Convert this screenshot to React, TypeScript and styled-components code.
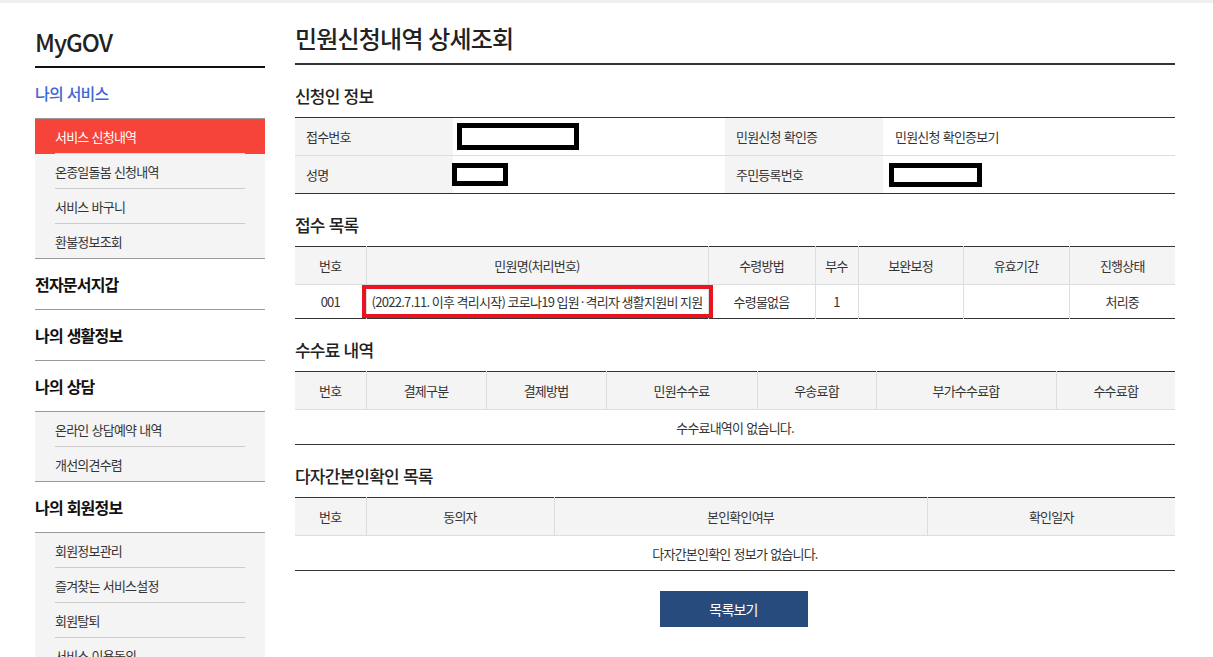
import React from "react";
import styled, { createGlobalStyle } from "styled-components";

const GlobalStyle = createGlobalStyle`
  html, body {
    margin: 0;
    padding: 0;
    background: #fff;
  }
  body {
    font-family: "Noto Sans CJK KR", "Noto Sans", sans-serif;
    color: #333;
    letter-spacing: -0.8px;
    word-spacing: 1px;
  }
  * { box-sizing: border-box; }
`;

interface MenuGroup {
  title: string;
  active?: boolean;
  items?: string[];
  current?: number;
}

const menu: MenuGroup[] = [
  { title: "나의 서비스", active: true, items: ["서비스 신청내역", "온종일돌봄 신청내역", "서비스 바구니", "환불정보조회"], current: 0 },
  { title: "전자문서지갑" },
  { title: "나의 생활정보" },
  { title: "나의 상담", items: ["온라인 상담예약 내역", "개선의견수렴"] },
  { title: "나의 회원정보", items: ["회원정보관리", "즐겨찾는 서비스설정", "회원탈퇴", "서비스 이용동의"] },
];

function App() {
  return (
    <>
      <GlobalStyle />
      <Page>
        <Sidebar>
          <Brand>MyGOV</Brand>
          {menu.map((g) => (
            <Group key={g.title}>
              <GroupTitle $active={g.active} $last={!g.items}>{g.title}</GroupTitle>
              {g.items && (
                <SubMenu>
                  {g.items.map((it, i) => (
                    <SubItem key={it} $current={g.current === i}>
                      <SubLabel $current={g.current === i}>{it}</SubLabel>
                    </SubItem>
                  ))}
                </SubMenu>
              )}
            </Group>
          ))}
        </Sidebar>

        <Main>
          <PageTitle>민원신청내역 상세조회</PageTitle>

          <SectionTitle>신청인 정보</SectionTitle>
          <Table>
            <colgroup>
              <col style={{ width: 158 }} />
              <col style={{ width: 272 }} />
              <col style={{ width: 158 }} />
              <col />
            </colgroup>
            <tbody>
              <InfoRow>
                <InfoHead>접수번호</InfoHead>
                <InfoCell $bare><Redact $w={122} $h={27} $x={4} /></InfoCell>
                <InfoHead>민원신청 확인증</InfoHead>
                <InfoCell>민원신청 확인증보기</InfoCell>
              </InfoRow>
              <InfoRow>
                <InfoHead>성명</InfoHead>
                <InfoCell $bare><Redact $w={56} $h={23} $x={-1} /></InfoCell>
                <InfoHead>주민등록번호</InfoHead>
                <InfoCell $bare><Redact $w={93} $h={24} $x={6} /></InfoCell>
              </InfoRow>
            </tbody>
          </Table>

          <SectionTitle>접수 목록</SectionTitle>
          <Table>
            <colgroup>
              <col style={{ width: 71 }} />
              <col style={{ width: 342 }} />
              <col style={{ width: 107 }} />
              <col style={{ width: 43 }} />
              <col style={{ width: 105 }} />
              <col style={{ width: 106 }} />
              <col />
            </colgroup>
            <thead>
              <tr>
                {["번호", "민원명(처리번호)", "수령방법", "부수", "보완보정", "유효기간", "진행상태"].map((h) => (
                  <HeadCell key={h}>{h}</HeadCell>
                ))}
              </tr>
            </thead>
            <tbody>
              <tr>
                <BodyCell>001</BodyCell>
                <BodyCell $tight>
                  (2022.7.11. 이후 격리시작) 코로나19 입원·격리자 생활지원비 지원
                  <Highlight />
                </BodyCell>
                <BodyCell>수령물없음</BodyCell>
                <BodyCell>1</BodyCell>
                <BodyCell />
                <BodyCell />
                <BodyCell>처리중</BodyCell>
              </tr>
            </tbody>
          </Table>

          <SectionTitle>수수료 내역</SectionTitle>
          <Table>
            <colgroup>
              <col style={{ width: 71 }} />
              <col style={{ width: 120 }} />
              <col style={{ width: 120 }} />
              <col style={{ width: 151 }} />
              <col style={{ width: 119 }} />
              <col style={{ width: 180 }} />
              <col />
            </colgroup>
            <thead>
              <tr>
                {["번호", "결제구분", "결제방법", "민원수수료", "우송료합", "부가수수료합", "수수료합"].map((h) => (
                  <HeadCell key={h}>{h}</HeadCell>
                ))}
              </tr>
            </thead>
            <tbody>
              <tr>
                <EmptyCell colSpan={7}>수수료내역이 없습니다.</EmptyCell>
              </tr>
            </tbody>
          </Table>

          <SectionTitle>다자간본인확인 목록</SectionTitle>
          <Table>
            <colgroup>
              <col style={{ width: 71 }} />
              <col style={{ width: 188 }} />
              <col style={{ width: 373 }} />
              <col />
            </colgroup>
            <thead>
              <tr>
                {["번호", "동의자", "본인확인여부", "확인일자"].map((h) => (
                  <HeadCell key={h}>{h}</HeadCell>
                ))}
              </tr>
            </thead>
            <tbody>
              <tr>
                <EmptyCell colSpan={4}>다자간본인확인 정보가 없습니다.</EmptyCell>
              </tr>
            </tbody>
          </Table>

          <ButtonRow>
            <ListButton type="button">목록보기</ListButton>
          </ButtonRow>
        </Main>
      </Page>
    </>
  );
}

const Page = styled.div`
  width: 1213px;
  height: 657px;
  overflow: hidden;
  border-top: 3px solid #efefef;
  display: flex;
  align-items: flex-start;
  gap: 30px;
  padding-left: 35px;
`;

const Sidebar = styled.nav`
  width: 230px;
  flex-shrink: 0;
  display: flex;
  flex-direction: column;
`;

const Brand = styled.div`
  margin-top: 22px;
  height: 43px;
  line-height: 34px;
  font-size: 24px;
  font-weight: 500;
  color: #222;
  border-bottom: 2px solid #111;
  letter-spacing: -1px;
`;

const Group = styled.div`
  display: flex;
  flex-direction: column;
`;

const GroupTitle = styled.div<{ $active?: boolean; $last?: boolean }>`
  height: ${(p) => (p.$last ? 51 : 50)}px;
  display: flex;
  align-items: center;
  font-size: 16px;
  font-weight: ${(p) => (p.$active ? 500 : 700)};
  color: ${(p) => (p.$active ? "#3c68d6" : "#111")};
  border-bottom: ${(p) => (p.$last ? "1px solid #999" : "none")};
`;

const SubMenu = styled.ul`
  list-style: none;
  margin: 0;
  padding: 0;
  background: #f4f4f4;
  border-top: 1px solid #999;
  border-bottom: 1px solid #999;
`;

const SubItem = styled.li<{ $current?: boolean }>`
  height: 35px;
  padding: 0 20px;
  background: ${(p) => (p.$current ? "#f6443a" : "transparent")};
  &:last-child {
    height: 34px;
  }
  &:last-child > span {
    border-bottom: none;
  }
`;

const SubLabel = styled.span<{ $current?: boolean }>`
  display: flex;
  align-items: center;
  height: 100%;
  font-size: 13px;
  color: ${(p) => (p.$current ? "#fff" : "#333")};
  border-bottom: 1px solid ${(p) => (p.$current ? "#ddd" : "#ccc")};
`;

const Main = styled.main`
  width: 880px;
  flex-shrink: 0;
  display: flex;
  flex-direction: column;
`;

const PageTitle = styled.h2`
  margin: 18px 0 0;
  height: 44px;
  line-height: 34px;
  font-size: 24px;
  font-weight: 500;
  color: #222;
  border-bottom: 2px solid #333;
`;

const SectionTitle = styled.h3`
  margin: 19px 0 9px;
  line-height: 24px;
  height: 24px;
  font-size: 17px;
  font-weight: 500;
  color: #222;
`;

const Table = styled.table`
  width: 100%;
  table-layout: fixed;
  border-collapse: collapse;
  border-top: 1px solid #333;
  border-bottom: 1px solid #333;
  font-size: 13px;
`;

const InfoRow = styled.tr`
  height: 38px;
  & + & {
    border-top: 1px solid #ddd;
  }
`;

const InfoHead = styled.th`
  background: #f4f4f4;
  text-align: left;
  font-weight: 400;
  padding: 0 11px;
  color: #333;
`;

const InfoCell = styled.td<{ $bare?: boolean }>`
  padding: 0 12px 0 ${(p) => (p.$bare ? 0 : 12)}px;
  color: #333;
`;

const Redact = styled.span<{ $w: number; $h: number; $x: number }>`
  display: block;
  width: ${(p) => p.$w}px;
  height: ${(p) => p.$h}px;
  margin-left: ${(p) => p.$x}px;
  border: 5px solid #000;
  background: #fff;
`;

const HeadCell = styled.th`
  height: 38px;
  background: #f4f4f4;
  font-weight: 400;
  color: #333;
  text-align: center;
  border-bottom: 1px solid #ddd;
  & + & {
    border-left: 1px solid #ddd;
  }
`;

const BodyCell = styled.td<{ $tight?: boolean }>`
  position: relative;
  height: 34px;
  text-align: center;
  color: #333;
  white-space: nowrap;
  letter-spacing: ${(p) => (p.$tight ? "-0.7px" : "-0.8px")};
  word-spacing: ${(p) => (p.$tight ? "0" : "1px")};
  padding: 0;
  & + & {
    border-left: 1px solid #ddd;
  }
`;

const Highlight = styled.span`
  position: absolute;
  left: -5px;
  right: -5px;
  top: 0;
  bottom: 0;
  border: 4px solid #e8141f;
  pointer-events: none;
`;

const EmptyCell = styled.td`
  height: 35px;
  text-align: center;
  color: #333;
`;

const ButtonRow = styled.div`
  display: flex;
  justify-content: center;
  margin-top: 20px;
  padding-right: 3px;
`;

const ListButton = styled.button`
  width: 148px;
  height: 36px;
  border: none;
  background: #284b7d;
  color: #fff;
  font-family: inherit;
  font-size: 14px;
  letter-spacing: -0.8px;
`;

export default App;
